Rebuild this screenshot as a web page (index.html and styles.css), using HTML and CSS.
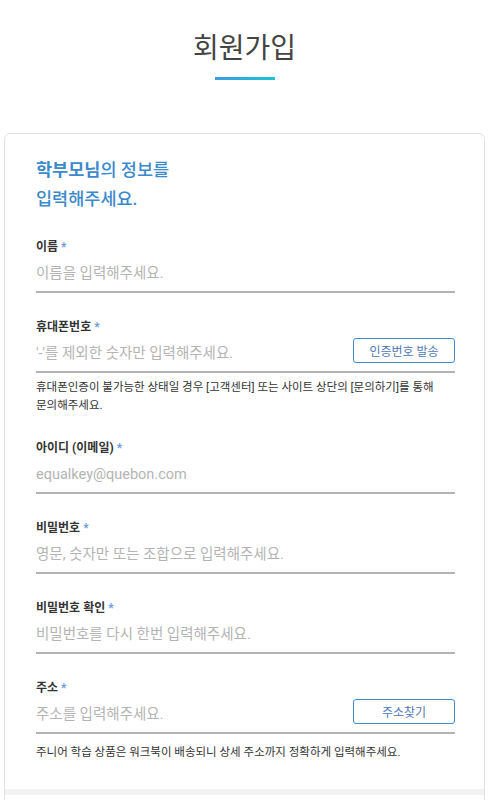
FILE: index.html
```html
<!DOCTYPE html>
<html>
<head>
    <meta charset="utf-8">
    <title>회원가입</title>
    <link rel="stylesheet" href="styles.css">
</head>
<body>
    <div class="page-head">
        <h1 class="page-title">회원가입</h1>
        <div class="title-bar"></div>
    </div>

    <div class="join-card">
        <div class="join-section">
            <h2 class="join-intro"><b>학부모님</b>의 정보를<br>입력해주세요.</h2>

            <div class="field">
                <label class="field-label" for="name">이름 <span class="req">*</span></label>
                <div class="field-row">
                    <input class="field-input" type="text" id="name" placeholder="이름을 입력해주세요.">
                </div>
            </div>

            <div class="field">
                <label class="field-label" for="phone">휴대폰번호 <span class="req">*</span></label>
                <div class="field-row">
                    <input class="field-input" type="tel" id="phone" placeholder="'-'를 제외한 숫자만 입력해주세요.">
                    <button class="field-btn" type="button">인증번호 발송</button>
                </div>
                <p class="field-help">휴대폰인증이 불가능한 상태일 경우 [고객센터] 또는 사이트 상단의 [문의하기]를 통해 문의해주세요.</p>
            </div>

            <div class="field">
                <label class="field-label" for="email">아이디 (이메일) <span class="req">*</span></label>
                <div class="field-row">
                    <input class="field-input" type="email" id="email" placeholder="equalkey@quebon.com">
                </div>
            </div>

            <div class="field">
                <label class="field-label" for="pw">비밀번호 <span class="req">*</span></label>
                <div class="field-row">
                    <input class="field-input" type="password" id="pw" placeholder="영문, 숫자만 또는 조합으로 입력해주세요.">
                </div>
            </div>

            <div class="field">
                <label class="field-label" for="pw2">비밀번호 확인 <span class="req">*</span></label>
                <div class="field-row">
                    <input class="field-input" type="password" id="pw2" placeholder="비밀번호를 다시 한번 입력해주세요.">
                </div>
            </div>

            <div class="field">
                <label class="field-label" for="addr">주소 <span class="req">*</span></label>
                <div class="field-row">
                    <input class="field-input" type="text" id="addr" placeholder="주소를 입력해주세요.">
                    <button class="field-btn" type="button">주소찾기</button>
                </div>
                <p class="field-help field-help-wide">주니어 학습 상품은 워크북이 배송되니 상세 주소까지 정확하게 입력해주세요.</p>
            </div>
        </div>
        <div class="join-divider"></div>
        <div class="join-section"></div>
    </div>
</body>
</html>
```

FILE: styles.css
```css
body {
    font-family: Roboto, "Noto Sans CJK KR", sans-serif;
    background-color: #fff;
    color: #333;
    margin: 0;
    padding: 0 4px;
    word-break: keep-all;
}

/* Seitentitel */
.page-head {
    padding-top: 28px;
    display: flex;
    flex-direction: column;
    align-items: center;
}

.page-title {
    margin: 0;
    font-size: 28px;
    line-height: 42px;
    font-weight: 400;
    color: #444;
}

.title-bar {
    width: 60px;
    height: 3px;
    margin-top: 7px;
    background: linear-gradient(to right, #3a9be2, #1cc3d6);
}

/* Karte */
.join-card {
    margin-top: 53px;
    border: 1px solid #e2e2e2;
    border-radius: 6px;
    background-color: #fff;
}

.join-section {
    padding: 22px 29px 28px 31px;
}

.join-intro {
    margin: 0 0 23px;
    font-size: 17.5px;
    line-height: 29px;
    font-weight: 500;
    color: #3c89cb;
}

.join-intro b {
    font-weight: 700;
}

.field {
    margin-bottom: 24px;
}

.field:last-child {
    margin-bottom: 0;
}

.field-label {
    display: block;
    padding-top: 2px;
    font-size: 12px;
    line-height: 16px;
    font-weight: 700;
    color: #333;
}

.req {
    color: #6b9bd6;
}

.field-row {
    display: flex;
    align-items: center;
    height: 36px;
    border-bottom: 2px solid #b3b3b3;
}

.field-input {
    flex: 1;
    min-width: 0;
    height: 100%;
    padding: 0;
    border: none;
    outline: none;
    font-family: inherit;
    font-size: 14.5px;
    color: #333;
    background: transparent;
}

.field-input::placeholder {
    color: #b4b4b4;
}

.field-btn {
    width: 102px;
    height: 25px;
    margin-bottom: 5px;
    padding: 0;
    border: 1px solid #3f8ccc;
    border-radius: 3px;
    background-color: #fff;
    font-family: inherit;
    font-size: 12px;
    color: #4f78b4;
    cursor: pointer;
}

.field-help {
    margin: 5px 0 0;
    font-size: 11.5px;
    line-height: 18px;
    color: #333;
}

.field-help-wide {
    margin-top: 9px;
}

.join-divider {
    height: 6px;
    background-color: #f2f2f2;
}
```
